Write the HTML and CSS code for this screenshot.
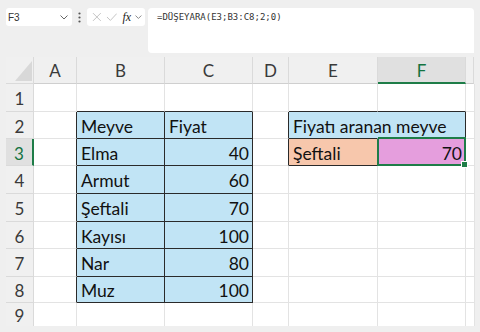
FILE: index.html
```html
<!DOCTYPE html>
<html lang="tr">
  <head>
    <meta charset="UTF-8" />
    <meta name="viewport" content="width=device-width, initial-scale=1.0" />
    <title>DÜŞEYARA</title>
    <link rel="stylesheet" href="styles.css">
  </head>
  <body>
    <div class="app">
      <div class="bar">
        <div class="namebox">
          <span>F3</span>
          <svg class="chev" width="8" height="5" viewBox="0 0 8 5"><path d="M0.5 0.5 L4 4 L7.5 0.5" fill="none" stroke="#666" stroke-width="1"/></svg>
        </div>
        <div class="dots">
          <svg width="3" height="11" viewBox="0 0 3 11"><circle cx="1.5" cy="1.5" r="1.1" fill="#555"/><circle cx="1.5" cy="5.5" r="1.1" fill="#555"/><circle cx="1.5" cy="9.5" r="1.1" fill="#555"/></svg>
        </div>
        <div class="fxbox">
          <svg width="10" height="10" viewBox="0 0 10 10"><path d="M1 1 L9 9 M9 1 L1 9" stroke="#c4c4c4" stroke-width="1"/></svg>
          <svg width="12" height="10" viewBox="0 0 12 10"><path d="M1 5 L4.5 8.5 L11 1.5" fill="none" stroke="#c4c4c4" stroke-width="1"/></svg>
          <span class="fx">fx</span>
          <svg class="chev" width="7" height="5" viewBox="0 0 7 5"><path d="M0.5 0.5 L3.5 3.5 L6.5 0.5" fill="none" stroke="#888" stroke-width="1"/></svg>
        </div>
        <div class="formula">=DÜŞEYARA(E3;B3:C8;2;0)</div>
      </div>

      <div class="sheet">
        <div class="h corner"></div>
        <div class="h col">A</div>
        <div class="h col">B</div>
        <div class="h col">C</div>
        <div class="h col">D</div>
        <div class="h col">E</div>
        <div class="h col sel">F</div>
        <div class="h col"></div>

        <div class="h row">1</div>
        <div class="c"></div>
        <div class="c tb"></div>
        <div class="c tb"></div>
        <div class="c"></div>
        <div class="c tb"></div>
        <div class="c tb"></div>
        <div class="c"></div>

        <div class="h row">2</div>
        <div class="c tr"></div>
        <div class="c t blue">Meyve</div>
        <div class="c t blue">Fiyat</div>
        <div class="c tr"></div>
        <div class="c t blue wide">Fiyatı aranan meyve</div>
        <div class="c t blue"></div>
        <div class="c"></div>

        <div class="h row rsel">3</div>
        <div class="c tr"></div>
        <div class="c t blue">Elma</div>
        <div class="c t blue num">40</div>
        <div class="c tr"></div>
        <div class="c t orange">Şeftali</div>
        <div class="c t pink num active">70</div>
        <div class="c"></div>

        <div class="h row">4</div>
        <div class="c tr"></div>
        <div class="c t blue">Armut</div>
        <div class="c t blue num">60</div>
        <div class="c"></div>
        <div class="c"></div>
        <div class="c"></div>
        <div class="c"></div>

        <div class="h row">5</div>
        <div class="c tr"></div>
        <div class="c t blue">Şeftali</div>
        <div class="c t blue num">70</div>
        <div class="c"></div>
        <div class="c"></div>
        <div class="c"></div>
        <div class="c"></div>

        <div class="h row">6</div>
        <div class="c tr"></div>
        <div class="c t blue">Kayısı</div>
        <div class="c t blue num">100</div>
        <div class="c"></div>
        <div class="c"></div>
        <div class="c"></div>
        <div class="c"></div>

        <div class="h row">7</div>
        <div class="c tr"></div>
        <div class="c t blue">Nar</div>
        <div class="c t blue num">80</div>
        <div class="c"></div>
        <div class="c"></div>
        <div class="c"></div>
        <div class="c"></div>

        <div class="h row">8</div>
        <div class="c tr"></div>
        <div class="c t blue">Muz</div>
        <div class="c t blue num">100</div>
        <div class="c"></div>
        <div class="c"></div>
        <div class="c"></div>
        <div class="c"></div>

        <div class="h row last">9</div>
        <div class="c last"></div>
        <div class="c last"></div>
        <div class="c last"></div>
        <div class="c last"></div>
        <div class="c last"></div>
        <div class="c last"></div>
        <div class="c last"></div>
      </div>
    </div>
  </body>
</html>
```

FILE: styles.css
```css
body {
  margin: 0;
  padding: 0;
  background: #efefef;
  font-family: Lato, "Liberation Sans", sans-serif;
}

.app {
  width: 480px;
  height: 332px;
  overflow: hidden;
}

.bar {
  display: flex;
  align-items: flex-start;
  padding: 8px 6px 0 6px;
  height: 45px;
}

.namebox {
  display: flex;
  align-items: center;
  justify-content: space-between;
  width: 66px;
  height: 18px;
  padding: 0 4px 0 2px;
  box-sizing: border-box;
  background: #fff;
  border-radius: 3px;
  font-family: "Liberation Sans", sans-serif;
  font-size: 10px;
  color: #333;
}

.dots {
  display: flex;
  align-items: center;
  justify-content: center;
  width: 15px;
  height: 18px;
}

.fxbox {
  display: flex;
  align-items: center;
  gap: 4px;
  width: 58px;
  height: 18px;
  padding: 0 3px 0 5px;
  box-sizing: border-box;
  background: #fff;
  border-radius: 3px;
}

.fx {
  font-family: "Liberation Serif", serif;
  font-style: italic;
  font-size: 12px;
  color: #222;
  margin-left: 1px;
}

.formula {
  flex: 1;
  height: 45px;
  margin-left: 3px;
  padding: 4px 0 0 9px;
  box-sizing: border-box;
  background: #fff;
  border-radius: 4px 4px 0 4px;
  font-family: "DejaVu Sans Mono", monospace;
  font-size: 9px;
  color: #333;
}

.sheet {
  display: grid;
  grid-template-columns: 28px 43px 88px 88px 36px 89px 88px 8px;
  grid-template-rows: 27px 28px 27px 27px 28px 28px 27px 28px 26px 23px;
  margin: 4px 0 0 6px;
  width: 468px;
  background: #fff;
}

.h {
  display: flex;
  align-items: center;
  justify-content: center;
  box-sizing: border-box;
  background: #f0f0f0;
  color: #3a3a3a;
  font-size: 17px;
  border-right: 1px solid #dadada;
  border-bottom: 1px solid #dadada;
}

.corner {
  position: relative;
  background: #f0f0f0;
}

.corner::after {
  content: '';
  position: absolute;
  right: 1px;
  bottom: 2px;
  width: 0;
  height: 0;
  border-left: 17px solid transparent;
  border-bottom: 20px solid #d8d8d8;
}

.col {
  padding-top: 1px;
  border-bottom-color: #cfcfcf;
}

.h.sel {
  background: #e0e0e0;
  color: #137340;
  border-bottom: 2px solid #1e7d48;
}

.row {
  padding-top: 2px;
}

.h.rsel {
  background: #e0e0e0;
  color: #137340;
  border-right: 2px solid #1e7d48;
}

.c {
  display: flex;
  align-items: center;
  padding: 2px 4px 0 4px;
  box-sizing: border-box;
  background: #fff;
  color: #111;
  font-size: 17.5px;
  white-space: nowrap;
  border-right: 1px solid #e3e3e3;
  border-bottom: 1px solid #e3e3e3;
}

.last {
  border-bottom: 0;
}

.c.t {
  border-right-color: #2a2a2a;
  border-bottom-color: #2a2a2a;
}

.c.tr {
  border-right-color: #2a2a2a;
}

.c.tb {
  border-bottom-color: #2a2a2a;
}

.c.wide {
  overflow: visible;
  position: relative;
  z-index: 1;
  border-right-color: #c1e4f5;
}

.blue {
  background: #c1e4f5;
}

.orange {
  background: #f7c7ac;
}

.pink {
  background: #e59edd;
}

.num {
  justify-content: flex-end;
  padding-right: 3px;
}

.active {
  position: relative;
}

.active::after {
  content: '';
  position: absolute;
  top: -2px;
  left: -1px;
  right: -1px;
  bottom: -1px;
  border: 2px solid #1e7d48;
}

.active::before {
  content: '';
  position: absolute;
  right: -3px;
  bottom: -3px;
  width: 5px;
  height: 5px;
  background: #1e7d48;
  border: 1px solid #fff;
  z-index: 2;
}
```
